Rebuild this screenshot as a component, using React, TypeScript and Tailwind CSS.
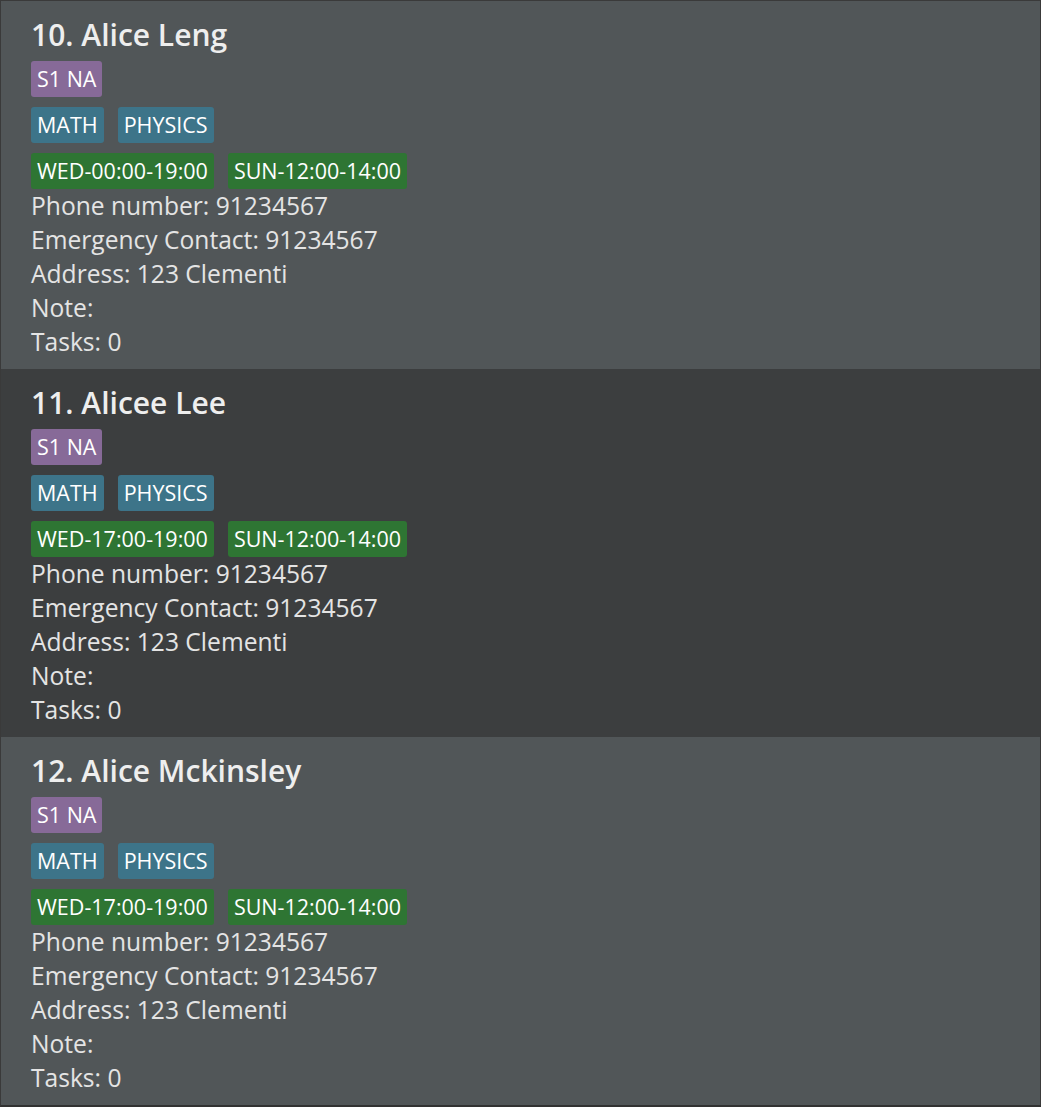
import React from "react";

type Person = {
  index: number;
  name: string;
  level: string;
  subjects: string[];
  slots: string[];
  phone: string;
  emergency: string;
  address: string;
  note: string;
  tasks: number;
};

const people: Person[] = [
  {
    index: 10,
    name: "Alice Leng",
    level: "S1 NA",
    subjects: ["MATH", "PHYSICS"],
    slots: ["WED-00:00-19:00", "SUN-12:00-14:00"],
    phone: "91234567",
    emergency: "91234567",
    address: "123 Clementi",
    note: "",
    tasks: 0,
  },
  {
    index: 11,
    name: "Alicee Lee",
    level: "S1 NA",
    subjects: ["MATH", "PHYSICS"],
    slots: ["WED-17:00-19:00", "SUN-12:00-14:00"],
    phone: "91234567",
    emergency: "91234567",
    address: "123 Clementi",
    note: "",
    tasks: 0,
  },
  {
    index: 12,
    name: "Alice Mckinsley",
    level: "S1 NA",
    subjects: ["MATH", "PHYSICS"],
    slots: ["WED-17:00-19:00", "SUN-12:00-14:00"],
    phone: "91234567",
    emergency: "91234567",
    address: "123 Clementi",
    note: "",
    tasks: 0,
  },
];

function Tag({ label, color }: { label: string; color: string }) {
  return (
    <span
      className={`flex h-[36px] items-center rounded-[3px] px-[6px] text-[21.5px] leading-[36px] text-white ${color}`}
    >
      {label}
    </span>
  );
}

function PersonCard({ p, dark }: { p: Person; dark: boolean }) {
  return (
    <div
      className={`h-[368px] pl-[30px] pt-[14px] ${dark ? "bg-[#3c3e3f]" : "bg-[#515658]"}`}
    >
      <div className="h-[40px] text-[30px] font-semibold leading-[40px] text-[#eeeeee]">
        {p.index}. {p.name}
      </div>
      <div className="mt-[6px] flex">
        <Tag label={p.level} color="bg-[#876a98]" />
      </div>
      <div className="mt-[10px] flex gap-[14px]">
        {p.subjects.map((s) => (
          <Tag key={s} label={s} color="bg-[#3d7489]" />
        ))}
      </div>
      <div className="mt-[10px] flex gap-[14px]">
        {p.slots.map((s) => (
          <Tag key={s} label={s} color="bg-[#2e7533]" />
        ))}
      </div>
      <div className="text-[24.6px] leading-[34px] text-[#e4e4e4]">
        <div>Phone number: {p.phone}</div>
        <div>Emergency Contact: {p.emergency}</div>
        <div>Address: {p.address}</div>
        <div>Note: {p.note}</div>
        <div>Tasks: {p.tasks}</div>
      </div>
    </div>
  );
}

export default function App() {
  return (
    <div
      className="h-[1107px] w-[1041px] border-x border-t border-b-2 border-x-[#3a3a3a] border-t-[#3a3a3a] border-b-[#323232] bg-[#515658]"
      style={{ fontFamily: '"Open Sans", sans-serif' }}
    >
      {people.map((p, i) => (
        <PersonCard key={p.index} p={p} dark={i % 2 === 1} />
      ))}
    </div>
  );
}
